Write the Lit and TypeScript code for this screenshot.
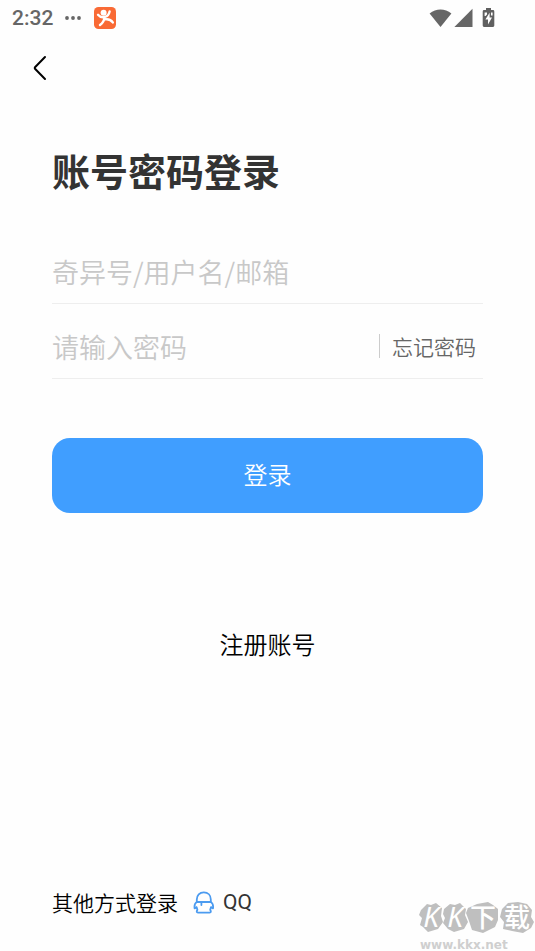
import { LitElement, html, css, svg } from "lit";
import { customElement, state } from "lit/decorators.js";

@customElement("status-bar")
class StatusBar extends LitElement {
  static styles = css`
    :host {
      display: flex;
      align-items: center;
      height: 36px;
      padding: 0 40px 0 12px;
      color: #666;
      font: 500 21px/36px Roboto, sans-serif;
    }
    .dots {
      width: 16px;
      height: 4px;
      margin-left: 12px;
    }
    .app {
      width: 24px;
      height: 24px;
      margin-left: 12px;
    }
    .signals {
      display: flex;
      align-items: center;
      margin-left: auto;
    }
    svg {
      display: block;
    }
    .wifi {
      width: 23px;
      height: 20px;
    }
    .cell {
      width: 19px;
      height: 20px;
      margin-left: 2px;
    }
    .battery {
      width: 13px;
      height: 20px;
      margin-left: 9px;
    }
  `;

  render() {
    return html`
      <span>2:32</span>
      <svg class="dots" viewBox="0 0 16 4" fill="#666" aria-hidden="true">
        <circle cx="2" cy="2" r="1.9" />
        <circle cx="8" cy="2" r="1.9" />
        <circle cx="14" cy="2" r="1.9" />
      </svg>
      <svg class="app" viewBox="0 0 24 24" aria-hidden="true">
        <rect x="1" y="1" width="22" height="22" rx="4.5" fill="#f96a35" />
        <circle cx="10.6" cy="6.8" r="3" fill="#fff" />
        <path
          d="M5 8.8C7 11.2 9.6 11.6 12 10.9C14.6 10.2 16 8.2 16.6 5.4M11.6 11.4C11.2 14.8 9.6 17.2 7 19M12 13.4C15.4 12.8 18 13.8 19.8 16.4"
          fill="none"
          stroke="#fff"
          stroke-width="2.4"
          stroke-linecap="round"
        />
      </svg>
      <div class="signals">
        <svg class="wifi" viewBox="0 0 23 20" aria-hidden="true">
          <path d="M.6 5.4C7 .2 16 .2 22.4 5.4L11.5 19Z" fill="#666" />
        </svg>
        <svg class="cell" viewBox="0 0 19 20" aria-hidden="true">
          <path d="M18.5.8V19H.4Z" fill="#666" />
        </svg>
        <svg class="battery" viewBox="0 0 13 20" aria-hidden="true">
          <path
            d="M4 0H9V2H11Q12.3 2 12.3 3.4V17.6Q12.3 19 11 19H2Q.7 19 .7 17.6V3.4Q.7 2 2 2H4Z"
            fill="#606060"
          />
          <path d="M7.6 4.8L3.4 11.4H6V16.4L10 9.6H7.6Z" fill="#fff" />
          <path d="M2.6 4.6H5V6.4L3.6 8H2.6ZM9 4.6H10.6V7.6H9Z" fill="#fff" />
        </svg>
      </div>
    `;
  }
}

@customElement("site-mark")
class SiteMark extends LitElement {
  static styles = css`
    :host {
      display: block;
      width: 116px;
    }
    .logo {
      display: block;
      width: 116px;
      height: 34px;
      overflow: visible;
    }
    .glyph {
      fill: #fff;
      font: 500 26px "Noto Sans CJK SC", sans-serif;
      text-anchor: middle;
    }
    .latin {
      font: italic 400 28px "Noto Sans", sans-serif;
    }
    .url {
      padding-left: 1px;
      font: bold 12px/20px "DejaVu Sans", sans-serif;
      color: #cfcfcf;
    }
  `;

  private shapes = [
    "M2 9L8 3L12 4L17 2L23 7L22 15L24 21L19 28L9 31L4 26L1 24L3 17L0 14Z",
    "M25 8L31 3L36 4L41 2L47 8L46 14L49 21L45 28L35 31L29 28L24 22L26 17L24 13Z",
    "M49 7L58 3L69 1L74 4L79 8L79 19L76 26L64 32L53 29L50 20L47 12Z",
    "M83 8L89 2L99 1L108 3L113 9L112 16L115 21L112 27L104 32L93 30L84 28L85 21L81 16Z",
  ];

  render() {
    return html`
      <svg class="logo" viewBox="0 0 116 34">
        ${this.shapes.map((d) => svg`<path d=${d} fill="#bfbfbf" />`)}
        <text class="glyph latin" x="12" y="26">K</text>
        <text class="glyph latin" x="36" y="26">K</text>
        <text class="glyph" x="64" y="26">下</text>
        <text class="glyph" x="98" y="26">载</text>
      </svg>
      <div class="url">www.kkx.net</div>
    `;
  }
}

@customElement("app-root")
class AppRoot extends LitElement {
  static styles = css`
    * {
      box-sizing: border-box;
    }
    :host {
      position: relative;
      display: flex;
      flex-direction: column;
      min-height: 100vh;
      overflow: hidden;
      background: #fefefe;
      color: #000;
      font-family: "Noto Sans CJK SC", sans-serif;
      font-weight: 350;
    }
    button,
    input {
      margin: 0;
      padding: 0;
      border: 0;
      background: none;
      font: inherit;
      color: inherit;
    }
    button {
      cursor: pointer;
    }
    a {
      color: inherit;
      text-decoration: none;
    }
    .nav {
      display: flex;
      height: 64px;
      padding: 16px 24px;
    }
    .back {
      display: grid;
      place-items: center;
      width: 32px;
      height: 32px;
    }
    .chevron {
      width: 14px;
      height: 26px;
    }
    main {
      display: flex;
      flex-direction: column;
      padding: 0 52px;
    }
    h1 {
      margin: 41px 0 30px;
      font-size: 38px;
      line-height: 58px;
      font-weight: 700;
      color: #333;
    }
    form {
      display: flex;
      flex-direction: column;
    }
    .field {
      display: flex;
      align-items: center;
      height: 75px;
      padding-top: 10px;
      border-bottom: 1px solid #eee;
    }
    .field input {
      flex: 1;
      min-width: 0;
      height: 48px;
      font-size: 27px;
      color: #333;
      outline: none;
    }
    .field input::placeholder {
      color: #c8c8c8;
      opacity: 1;
    }
    .forgot {
      padding: 0 7px 0 12px;
      border-left: 1px solid #ccc;
      font-size: 21px;
      line-height: 24px;
      color: #666;
    }
    .submit {
      height: 75px;
      margin-top: 59px;
      padding-bottom: 4px;
      border-radius: 18px;
      background: #409eff;
      color: #fff;
      font-size: 24px;
    }
    .register {
      align-self: center;
      margin-top: 113px;
      font-size: 24px;
      line-height: 36px;
    }
    footer {
      display: flex;
      align-items: center;
      margin-top: auto;
      padding: 0 52px 33px;
      font-size: 21px;
      line-height: 32px;
    }
    .qq {
      display: flex;
      align-items: center;
      gap: 8px;
      margin-left: 15px;
      font-family: Roboto, sans-serif;
      font-weight: 400;
      color: #333;
    }
    .qq-icon {
      width: 22px;
      height: 24px;
    }
    .mark {
      position: absolute;
      right: 0;
      bottom: -4px;
    }
  `;

  @state() private account = "";
  @state() private password = "";

  render() {
    return html`
      <status-bar></status-bar>
      <div class="nav">
        <button class="back" type="button" aria-label="返回">
          <svg
            class="chevron"
            viewBox="0 0 14 26"
            fill="none"
            stroke="#000"
            stroke-width="2"
            stroke-linecap="round"
            stroke-linejoin="round"
          >
            <path d="M12 2L2 12.2Q1.4 13 2 13.8L12 24" />
          </svg>
        </button>
      </div>
      <main>
        <h1>账号密码登录</h1>
        <form @submit=${(e: Event) => e.preventDefault()}>
          <div class="field">
            <input
              type="text"
              aria-label="账号"
              placeholder="奇异号/用户名/邮箱"
              .value=${this.account}
              @input=${(e: Event) => (this.account = (e.target as HTMLInputElement).value)}
            />
          </div>
          <div class="field">
            <input
              type="password"
              aria-label="密码"
              placeholder="请输入密码"
              .value=${this.password}
              @input=${(e: Event) => (this.password = (e.target as HTMLInputElement).value)}
            />
            <a class="forgot" href="#forgot">忘记密码</a>
          </div>
          <button class="submit" type="submit">登录</button>
        </form>
        <a class="register" href="#register">注册账号</a>
      </main>
      <footer>
        <span>其他方式登录</span>
        <button class="qq" type="button">
          <svg
            class="qq-icon"
            viewBox="0 0 22 24"
            fill="none"
            stroke="#4b9bf0"
            stroke-width="1.8"
            stroke-linecap="round"
            stroke-linejoin="round"
            aria-hidden="true"
          >
            <path d="M3.8 12V9.6C3.8 5.4 6.6 2.4 10.8 2.4S17.8 5.4 17.8 9.6V12" />
            <path d="M3.8 12H17.8C19.6 13 20.4 15.4 20 18.4L18.4 17.4M3.8 12C2 13 1.2 15.4 1.6 18.4L3.2 17.4" />
            <path d="M3.6 17.2L4.4 19.8Q2.8 22.6 5 22.6H16.6Q18.8 22.6 17.2 19.8L18 17.2" />
            <path d="M8.4 12.4V15" />
          </svg>
          QQ
        </button>
      </footer>
      <site-mark class="mark"></site-mark>
    `;
  }
}
